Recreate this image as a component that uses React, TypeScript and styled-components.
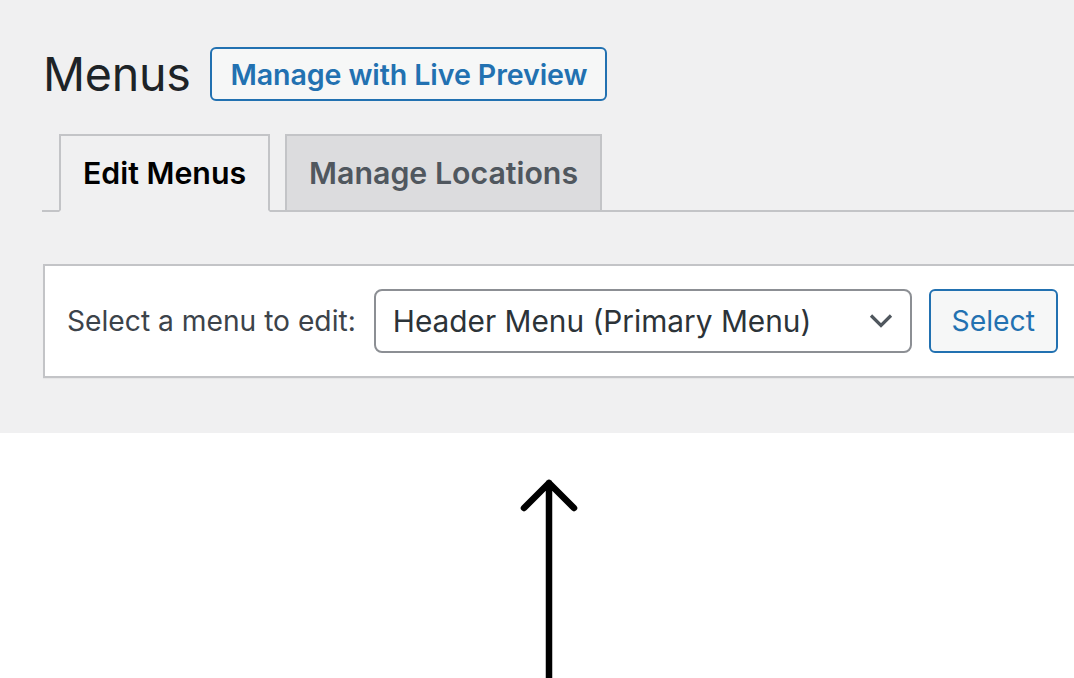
import styled, { createGlobalStyle } from 'styled-components';

const GlobalStyle = createGlobalStyle`
  html, body {
    margin: 0;
    padding: 0;
    background: #fff;
  }
  body {
    font-family: Inter, "Noto Sans", "Liberation Sans", sans-serif;
    overflow: hidden;
  }
`;

const App = () => (
  <>
    <GlobalStyle />
    <AdminArea>
      <Header>
        <Title>Menus</Title>
        <OutlineButton>Manage with Live Preview</OutlineButton>
      </Header>

      <TabBar>
        <Tab $active>Edit Menus</Tab>
        <Tab>Manage Locations</Tab>
      </TabBar>

      <Panel>
        <FieldLabel htmlFor="menu">Select a menu to edit:</FieldLabel>
        <SelectBox id="menu">
          <span>Header Menu (Primary Menu)</span>
          <svg width="24" height="16" viewBox="0 0 24 16">
            <path d="M2 2.5l10 10 10-10" fill="none" stroke="#50575e" strokeWidth="3.2" />
          </svg>
        </SelectBox>
        <SecondaryButton>Select</SecondaryButton>
      </Panel>
    </AdminArea>

    <Blank>
      <svg width="1074" height="245" viewBox="0 0 1074 245">
        <path
          d="M549 50 V250 M524 75 L549 50 L574 75"
          fill="none"
          stroke="#000"
          strokeWidth="6.5"
          strokeLinecap="round"
          strokeLinejoin="round"
        />
      </svg>
    </Blank>
  </>
);

export default App;

const AdminArea = styled.div`
  background: #f0f0f1;
  height: 433px;
  box-sizing: border-box;
  padding: 47px 0 0 42px;
  overflow: hidden;
`;

const Header = styled.div`
  display: flex;
  align-items: center;
  gap: 20px;
  margin-left: 1px;
`;

const Title = styled.h1`
  margin: 0;
  font-size: 46.6px;
  font-weight: 400;
  line-height: 53px;
  color: #1d2327;
  letter-spacing: -0.3px;
`;

const OutlineButton = styled.button`
  height: 54px;
  padding: 0 18px;
  background: #f6f7f7;
  border: 2px solid #2271b1;
  border-radius: 6px;
  color: #2271b1;
  font-family: inherit;
  font-size: 28.6px;
  font-weight: 600;
  letter-spacing: -0.1px;
`;

const TabBar = styled.div`
  display: flex;
  gap: 15px;
  margin-top: 33px;
  padding-left: 17px;
  border-bottom: 2px solid #c3c4c7;
`;

const Tab = styled.div<{ $active?: boolean }>`
  height: 78px;
  box-sizing: border-box;
  display: flex;
  align-items: center;
  padding: 0 22px;
  margin-bottom: -2px;
  border: 2px solid #c3c4c7;
  border-bottom-color: ${({ $active }) => ($active ? '#f0f0f1' : '#c3c4c7')};
  background: ${({ $active }) => ($active ? '#f0f0f1' : '#dcdcde')};
  color: ${({ $active }) => ($active ? '#000' : '#50575e')};
  font-size: 30.3px;
  font-weight: 600;
`;

const Panel = styled.div`
  display: flex;
  align-items: center;
  margin: 52px -20px 0 1px;
  padding: 23px 22px 23px;
  background: #fff;
  border: 2px solid #c3c4c7;
  box-shadow: 0 1px 1px rgba(0, 0, 0, 0.04);
`;

const FieldLabel = styled.label`
  font-size: 28.2px;
  color: #3c434a;
  margin-right: 18px;
`;

const SelectBox = styled.div`
  width: 538px;
  height: 64px;
  box-sizing: border-box;
  display: flex;
  align-items: center;
  justify-content: space-between;
  padding: 0 17px 0 17px;
  border: 2px solid #8c8f94;
  border-radius: 8px;
  background: #fff;
  color: #2c3338;
  font-size: 29.8px;
`;

const SecondaryButton = styled.button`
  margin-left: 17px;
  width: 129px;
  height: 64px;
  background: #f6f7f7;
  border: 2px solid #2271b1;
  border-radius: 6px;
  color: #2271b1;
  font-family: inherit;
  font-size: 28.3px;
`;

const Blank = styled.div`
  height: 245px;
  background: #fff;
  line-height: 0;
`;
